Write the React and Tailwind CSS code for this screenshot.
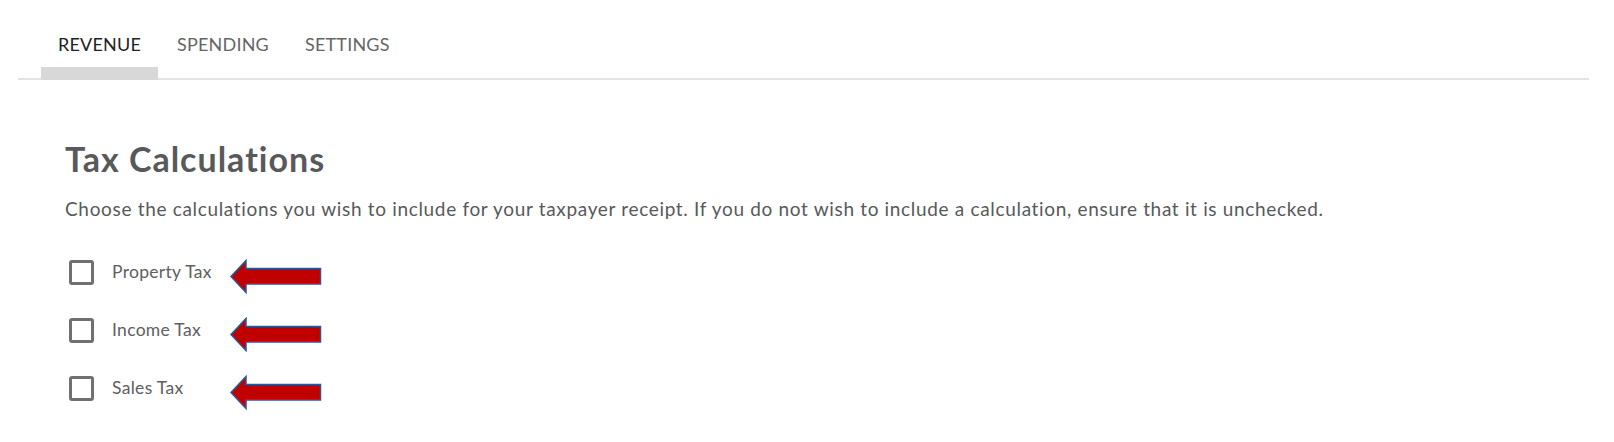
import React from 'react';

const tabs = ['REVENUE', 'SPENDING', 'SETTINGS'];
const taxes = ['Property Tax', 'Income Tax', 'Sales Tax'];

// red block arrow pointing left
const Arrow = () => (
  <svg width="92" height="35" viewBox="0 0 92 35" className="shrink-0 mt-[8px]">
    <polygon
      points="1,17.5 16,1.5 16,9.5 90.5,9.5 90.5,25 16,25 16,33.5"
      fill="#c00000"
      stroke="#2f5597"
      strokeWidth="1.5"
      strokeLinejoin="miter"
    />
  </svg>
);

const App = () => {
  return (
    <div className="w-[1614px] h-[442px] bg-white font-['Lato',sans-serif] text-[#58595b]">
      <nav className="ml-[18px] mr-[25px] pt-[32px] border-b-2 border-[#e3e3e3] flex gap-[2px] pl-[23px]">
        {tabs.map((t, i) => (
          <div
            key={t}
            className={`px-[17px] pb-[11px] text-[18px] leading-[24px] tracking-[0.2px] border-b-[13px] -mb-[2px] ${
              i === 0 ? 'text-[#222] border-[#d8d8d8]' : 'text-[#666] border-transparent'
            }`}
          >
            {t}
          </div>
        ))}
      </nav>

      <section className="pl-[65px] pt-[59px]">
        <h2 className="text-[34px] leading-[40px] font-bold tracking-[1px] text-[#58595b]">Tax Calculations</h2>
        <p className="mt-[18px] text-[19px] leading-[24px] tracking-[0.67px] text-[#58595b]">
          Choose the calculations you wish to include for your taxpayer receipt. If you do not wish to include a calculation, ensure that it is unchecked.
        </p>

        <div className="mt-[39px] flex flex-col gap-[33px] pl-[4px]">
          {taxes.map((t) => (
            <label key={t} className="flex items-center h-[25px]">
              <span className="w-[25px] h-[25px] border-[3px] border-[#707070] rounded-[3px] shrink-0" />
              <span className="ml-[18px] w-[118px] text-[17.5px] tracking-[0.3px] text-[#5f6062]">{t}</span>
              <Arrow />
            </label>
          ))}
        </div>
      </section>
    </div>
  );
};

export default App;
